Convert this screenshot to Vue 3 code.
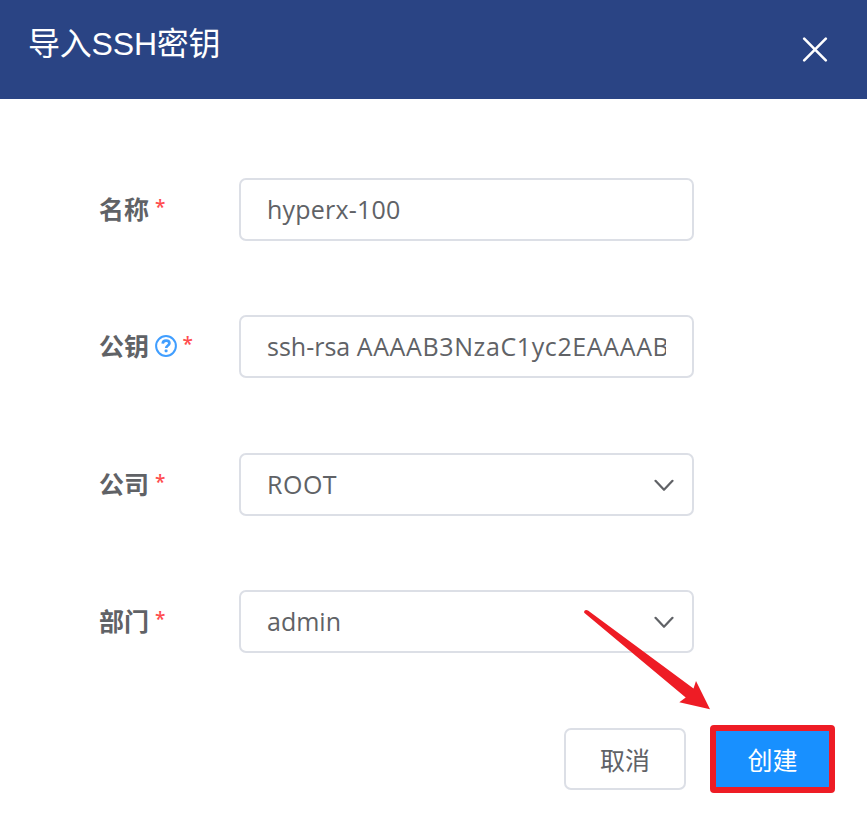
<script setup>
const fields = [
  { id: 'name', label: '名称', value: ['hyperx-100'], type: 'input' },
  { id: 'key', label: '公钥', value: ['ssh-rsa ', 'AAAAB3NzaC1yc2EAAAAB'], type: 'input', help: true },
  { id: 'company', label: '公司', value: ['ROOT'], type: 'select' },
  { id: 'dept', label: '部门', value: ['admin'], type: 'select' }
]
</script>

<template>
  <div class="dialog">
    <header class="header">
      <h1 class="title">导入SSH密钥</h1>
      <svg class="close" width="26" height="26" viewBox="0 0 26 26">
        <path d="M2.200 2.700L23.800 24.300M23.800 2.700L2.200 24.300" />
      </svg>
    </header>

    <main class="form">
      <div v-for="f in fields" :key="f.id" class="row">
        <div class="label">
          <span class="label-text">{{ f.label }}</span>
          <svg v-if="f.help" class="help" width="22" height="22" viewBox="0 0 22 22">
            <circle cx="11" cy="11" r="9.9" />
            <path d="M7.7 8.6C7.8 6.6 9.1 5.6 11.1 5.6C13.1 5.6 14.4 6.7 14.4 8.3C14.4 10.5 11.2 10.5 11.2 13.1" />
            <rect x="9.7" y="14.6" width="2.8" height="2.6" rx="0.6" />
          </svg>
          <span class="required">*</span>
        </div>
        <div class="control" :class="f.id">
          <span class="value"><span v-for="part in f.value" :key="part" class="part">{{ part }}</span></span>
          <svg v-if="f.type === 'select'" class="chevron" width="20" height="13" viewBox="0 0 20 13">
            <path d="M1.5 1.800L10 10.800L18.500 1.800" />
          </svg>
        </div>
      </div>
    </main>

    <footer class="footer">
      <button class="btn cancel">取消</button>
      <button class="btn create">创建</button>
    </footer>

    <svg class="arrow" width="128" height="104" viewBox="0 0 128 104">
      <path d="M1.2 3.8C0.6 1.4 3 0.2 5 1.6L110.500 79.600L113 72L127 100.200L96.300 93.200L102.700 88.600Z" />
    </svg>
  </div>
</template>

<style>
body {
  margin: 0;
  background: #fff;
}
</style>

<style scoped>
.dialog {
  position: relative;
  box-sizing: border-box;
  width: 867px;
  height: 821px;
  overflow: hidden;
  background: #fff;
  color: #606266;
  font-family: "Open Sans", "Noto Sans CJK SC", sans-serif;
}
.header {
  display: flex;
  justify-content: space-between;
  box-sizing: border-box;
  height: 99px;
  padding: 20px 39px 0 28px;
  background: #2a4484;
}
.title {
  margin: 0;
  color: #fff;
  font: 400 32px/48px "Liberation Sans", "Noto Sans CJK SC", sans-serif;
  letter-spacing: -0.2px;
}
.close {
  margin-top: 16px;
  fill: none;
  stroke: #fff;
  stroke-width: 2.6;
  stroke-linecap: round;
}
.form {
  display: flex;
  flex-direction: column;
  gap: 74.400px;
  padding: 79px 0 0 99px;
}
.row {
  display: flex;
  height: 63px;
}
.label {
  display: flex;
  align-items: center;
  width: 140px;
}
.label-text {
  margin-bottom: 3.400px;
  font: 700 25px/36px "Noto Sans CJK SC", sans-serif;
}
.help {
  margin: 0 0 2px 5.500px;
  fill: none;
  stroke: #409eff;
  stroke-width: 2;
}
.help path {
  stroke-width: 2.7;
}
.help rect {
  fill: #409eff;
  stroke: none;
}
.required {
  margin: 0 0 5px 6px;
  color: #ff4d4f;
  font: 600 19px/36px "Open Sans", sans-serif;
}
.control {
  display: flex;
  align-items: center;
  justify-content: space-between;
  box-sizing: border-box;
  width: 455px;
  padding: 0 18px 0 26px;
  border: 2px solid #dcdfe6;
  border-radius: 7px;
}
.control.name,
.control.key {
  padding-right: 26px;
}
.value {
  overflow: hidden;
  margin-bottom: 1.400px;
  white-space: pre;
  font-size: 25px;
  line-height: 40px;
}
.name .part {
  letter-spacing: 0.2px;
}
.key .part + .part {
  letter-spacing: 0.62px;
}
.company .part {
  letter-spacing: 0.5px;
}
.chevron {
  flex: none;
  margin-top: 2px;
  fill: none;
  stroke: #606266;
  stroke-width: 2.2;
  stroke-linecap: round;
  stroke-linejoin: round;
}
.footer {
  display: flex;
  justify-content: flex-end;
  align-items: center;
  gap: 24px;
  height: 68px;
  padding: 72px 32px 0 0;
}
.btn {
  box-sizing: border-box;
  padding: 0;
  font: 400 25px/36px "Noto Sans CJK SC", sans-serif;
}
.cancel {
  width: 122px;
  height: 62px;
  border: 2px solid #dcdfe6;
  border-radius: 7px;
  background: #fff;
  color: #606266;
}
.create {
  width: 125px;
  height: 68px;
  border: 6px solid #ee1c25;
  border-radius: 4px;
  background: #1890ff;
  color: #fff;
}
.arrow {
  position: absolute;
  left: 583px;
  top: 609px;
  fill: #ee1c25;
}
</style>
